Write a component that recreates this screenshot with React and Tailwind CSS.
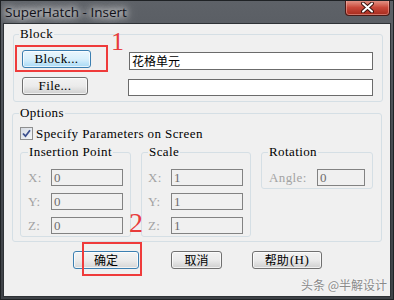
import React from 'react';

const mono = "font-['Liberation_Serif','Times_New_Roman',serif] text-[13px] leading-[12px] tracking-[0.4px]";
const cjk = "font-['Noto_Sans_CJK_SC','Noto_Sans',sans-serif] text-[12px] leading-[14px]";

function WinButton({ children, focused, className = '' }) {
  const skin = focused
    ? 'border-[#3c7fb1] bg-gradient-to-b from-[#eaf6fd] via-[#d9f0fc] to-[#a7d9f5]'
    : 'border-[#707070] bg-gradient-to-b from-[#f2f2f2] via-[#ebebeb] to-[#cfcfcf]';
  return (
    <div
      className={`flex items-center justify-center rounded-[3px] border text-black shadow-[inset_0_0_0_1px_rgba(255,255,255,0.7)] ${skin} ${className}`}
    >
      {children}
    </div>
  );
}

function Field({ value, disabled, className = '' }) {
  return (
    <div
      className={`flex items-center border pl-[2px] ${
        disabled ? 'border-[#828282] bg-[#f0f0f0] text-[#6d6d6d]' : 'border-[#6b6b6b] bg-white text-black'
      } ${className}`}
    >
      {value}
    </div>
  );
}

function Group({ label, className = '', legendClass = '', children }) {
  return (
    <fieldset className={`rounded-[3px] border border-[#d5dfe5] ${className}`}>
      <legend className={`px-[1px] ${mono} text-black ${legendClass}`}>{label}</legend>
      {children}
    </fieldset>
  );
}

function CoordRow({ label, value, labelWidth = 'w-[23px]', inputWidth = 'w-[72px]', className = '' }) {
  return (
    <div className={`flex items-center ${className}`}>
      <span className={`${labelWidth} ${mono} text-[#a3a3a3]`}>{label}</span>
      <Field value={<span className={mono}>{value}</span>} disabled className={`${inputWidth} h-[17px]`} />
    </div>
  );
}

export default function App() {
  return (
    <div className="flex h-[300px] w-[394px] flex-col overflow-hidden border border-[#1f2225] bg-gradient-to-b from-[#5e6268] via-[#474b51] to-[#3e4247] px-[2px] pb-[2px]">
      {/* title bar */}
      <div className="flex h-[22px] items-start justify-between">
        <span className="ml-[2px] mt-[2px] font-['Open_Sans',sans-serif] text-[13.5px] leading-[18px] text-[#101018] [text-shadow:0_0_6px_#fff,0_0_10px_#e8e8e8,0_0_14px_#d0d0d0]">
          SuperHatch - Insert
        </span>
        <div className="-mt-[1px] mr-[1px] flex h-[16px] w-[45px] items-center justify-center rounded-b-[4px] border border-t-0 border-[#4a1a16] bg-gradient-to-b from-[#e59b8f] via-[#c9483a] to-[#a52a1c] shadow-[inset_0_0_0_1px_rgba(255,200,190,0.45)]">
          <svg width="13" height="11" viewBox="0 0 13 11">
            <path d="M2 1.5 L11 9.5 M11 1.5 L2 9.5" stroke="#3a1410" strokeWidth="4" strokeLinecap="round" />
            <path d="M2 1.5 L11 9.5 M11 1.5 L2 9.5" stroke="#ffffff" strokeWidth="2" strokeLinecap="round" />
          </svg>
        </div>
      </div>

      {/* client area */}
      <div className="flex flex-1 flex-col border border-[#2e3236] bg-[#f0f0f0]">
        {/* Block */}
        <Group label="Block" className="ml-[9px] mt-[4px] w-[370px] px-[8px] pb-[5px] pt-[10px]" legendClass="-ml-[3px]">
          <div className="relative flex items-start">
            <WinButton focused className="h-[18px] w-[69px]">
              <span className={mono}>Block...</span>
            </WinButton>
            <span className="pointer-events-none absolute -left-[7px] -top-[5px] h-[27px] w-[93px] border-2 border-[#ef3b3b]" />
            <span className="absolute left-[89px] -top-[21px] font-['Liberation_Serif',serif] text-[26px] leading-[26px] text-[#e83b3b]">1</span>
            <Field
              value={<span className="font-['Noto_Sans_CJK_SC',sans-serif] text-[12px] leading-[14px]">花格单元</span>}
              className="ml-[38px] mt-[2px] h-[18px] w-[244px]"
            />
          </div>
          <div className="mt-[7px] flex items-start">
            <WinButton className="h-[18px] w-[66px]">
              <span className={mono}>File...</span>
            </WinButton>
            <Field value="" className="ml-[40px] mt-[2px] h-[17px] w-[245px]" />
          </div>
        </Group>

        {/* Options */}
        <Group label="Options" className="ml-[8px] mt-[5px] w-[370px] pb-[4px] pl-[7px] pr-[8px] pt-[8px]" legendClass="-ml-[1px]">
          <div className="flex items-center">
            <div className="flex h-[13px] w-[13px] items-center justify-center border border-[#8e8f8f] bg-gradient-to-br from-[#d6dbe3] to-[#f4f6f9]">
              <svg width="9" height="9" viewBox="0 0 9 9">
                <path d="M1 4.5 L3.5 7.2 L8 1.3" stroke="#3b4f8e" strokeWidth="1.8" fill="none" />
              </svg>
            </div>
            <span className={`ml-[3px] ${mono} text-black`}>Specify Parameters on Screen</span>
          </div>

          <div className="relative mt-[6px] flex items-start gap-[10px]">
            <Group label="Insertion Point" className="w-[111px] pb-[2px] pl-[7px] pr-[7px] pt-[11px]" legendClass="ml-0">
              <CoordRow label="X:" value="0" />
              <CoordRow label="Y:" value="0" className="mt-[7px]" />
              <CoordRow label="Z:" value="0" className="mt-[7px]" />
            </Group>
            <Group label="Scale" className="w-[110px] pb-[2px] pl-[6px] pr-[7px] pt-[11px]" legendClass="ml-0">
              <CoordRow label="X:" value="1" />
              <CoordRow label="Y:" value="1" className="mt-[7px]" />
              <CoordRow label="Z:" value="1" className="mt-[7px]" />
            </Group>
            <Group label="Rotation" className="w-[112px] pb-[2px] pl-[7px] pr-[7px] pt-[11px]" legendClass="-ml-[1px]">
              <CoordRow label="Angle:" value="0" labelWidth="w-[48px]" inputWidth="w-[48px]" />
            </Group>
            <span className="absolute left-[109px] top-[63px] font-['Liberation_Serif',serif] text-[28px] leading-[28px] text-[#e83b3b]">2</span>
          </div>
        </Group>

        {/* dialog buttons */}
        <div className="ml-[69px] mt-[9px] flex items-start">
          <div className="relative">
            <WinButton focused className="h-[18px] w-[66px] border-[#3c7fb1] from-[#f4f4f4] via-[#ececec] to-[#d6d6d6]">
              <span className={cjk}>确定</span>
            </WinButton>
            <span className="pointer-events-none absolute left-[9px] -top-[9px] h-[34px] w-[60px] border-2 border-[#ef3b3b]" />
          </div>
          <WinButton className="ml-[32px] h-[18px] w-[51px]">
            <span className={cjk}>取消</span>
          </WinButton>
          <WinButton className="ml-[30px] h-[18px] w-[70px]">
            <span className={cjk}>帮助</span>
            <span className={`${mono} ml-[1px]`}>(H)</span>
          </WinButton>
        </div>

        <div className="mr-[3px] mt-[9px] flex justify-end">
          <span className="font-['Noto_Sans_CJK_SC',sans-serif] text-[12px] leading-[14px] text-[#8a8a8a] [text-shadow:0_0_2px_#fff]">
            头条 @半解设计
          </span>
        </div>
      </div>
    </div>
  );
}
